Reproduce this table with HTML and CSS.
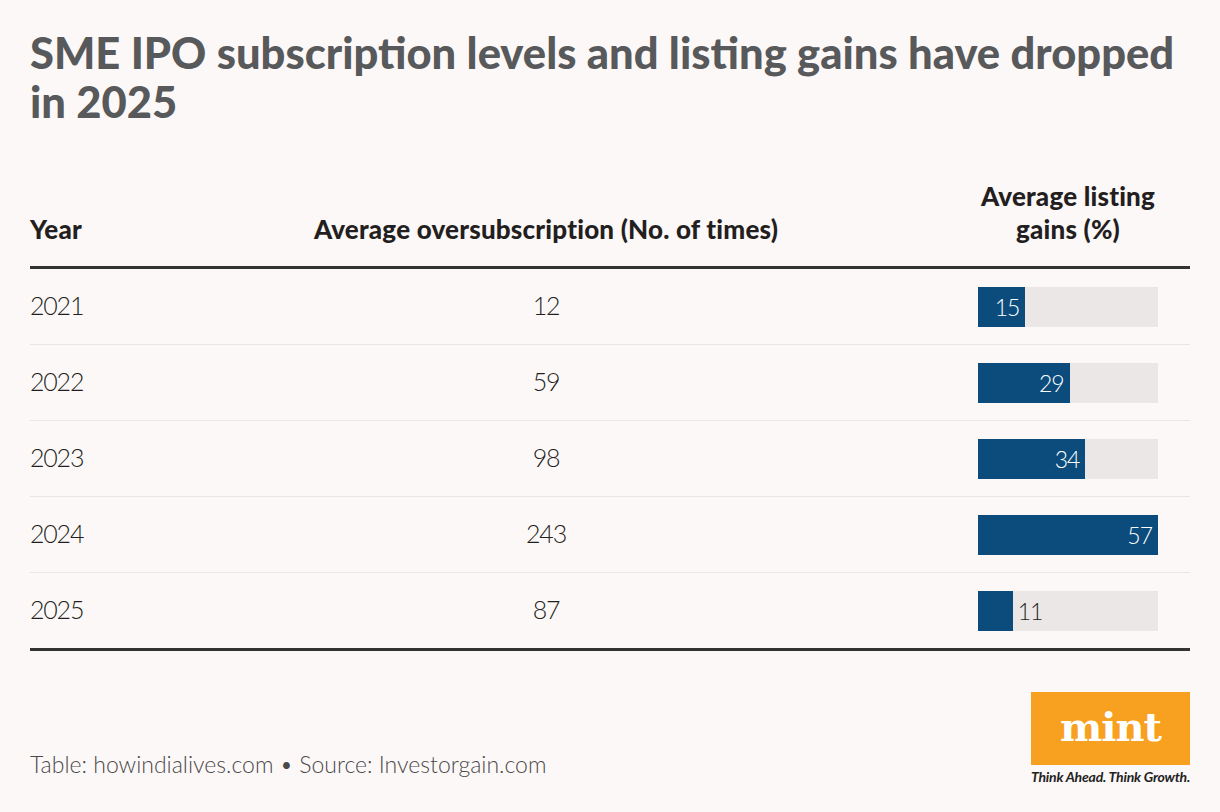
FILE: index.html
```html
<!DOCTYPE html>
<html>
<head>
<meta charset="utf-8">
<link rel="stylesheet" href="styles.css">
</head>
<body>
<div class="page">
  <h1 class="title">SME IPO subscription levels and listing gains have dropped in 2025</h1>
  <div class="table">
    <div class="row head">
      <div class="c-year">Year</div>
      <div class="c-sub">Average oversubscription (No. of times)</div>
      <div class="c-gain">Average listing<br>gains (%)</div>
    </div>
    <div class="row">
      <div class="c-year">2021</div>
      <div class="c-sub">12</div>
      <div class="c-gain"><div class="track"><div class="bar" style="width:47.4px"><span class="lbl">15</span></div></div></div>
    </div>
    <div class="row">
      <div class="c-year">2022</div>
      <div class="c-sub">59</div>
      <div class="c-gain"><div class="track"><div class="bar" style="width:91.6px"><span class="lbl">29</span></div></div></div>
    </div>
    <div class="row">
      <div class="c-year">2023</div>
      <div class="c-sub">98</div>
      <div class="c-gain"><div class="track"><div class="bar" style="width:107.4px"><span class="lbl">34</span></div></div></div>
    </div>
    <div class="row">
      <div class="c-year">2024</div>
      <div class="c-sub">243</div>
      <div class="c-gain"><div class="track"><div class="bar" style="width:180px"><span class="lbl">57</span></div></div></div>
    </div>
    <div class="row last">
      <div class="c-year">2025</div>
      <div class="c-sub">87</div>
      <div class="c-gain"><div class="track"><div class="bar" style="width:34.7px"></div><span class="lbl out">11</span></div></div>
    </div>
  </div>
  <div class="footer">
    <div class="source">Table: howindialives.com • Source: Investorgain.com</div>
    <div class="logo">
      <div class="mint">mint</div>
      <div class="tag">Think Ahead. Think Growth.</div>
    </div>
  </div>
</div>
</body>
</html>
```
FILE: styles.css
```css
html, body {
  margin: 0;
  padding: 0;
  background: #fdf8f8;
}
.page {
  width: 1220px;
  height: 812px;
  box-sizing: border-box;
  padding: 28px 30px 0 30px;
  font-family: Lato, "Liberation Sans", sans-serif;
  color: #231f20;
}
.title {
  margin: 0;
  font-family: Lato, sans-serif;
  font-weight: 900;
  font-size: 43.5px;
  line-height: 49px;
  color: #58595b;
  letter-spacing: 0;
}
.table {
  margin-top: 54px;
  border-bottom: 3px solid #333;
}
.row {
  display: grid;
  grid-template-columns: 116px 800px 244px;
  align-items: center;
  height: 75px;
  border-bottom: 1px solid #ebe6e6;
  font-size: 25px;
  letter-spacing: -1.2px;
  font-weight: 300;
  color: #231f20;
}
.row .c-year, .row .c-sub {
  padding-bottom: 4px;
}
.row.head .c-year, .row.head .c-sub {
  padding-bottom: 0;
}
.row.last {
  border-bottom: none;
}
.row.head {
  height: auto;
  align-items: end;
  padding-bottom: 20px;
  border-bottom: 3px solid #333;
  font-weight: 900;
  font-size: 26px;
  letter-spacing: 0.2px;
  line-height: 33px;
  color: #231f20;
}
.c-sub, .c-gain {
  text-align: center;
}
.c-gain {
  display: flex;
  justify-content: center;
}
.head .c-gain {
  display: block;
}
.track {
  width: 180px;
  height: 40px;
  background: #ece7e7;
  display: flex;
  align-items: center;
}
.bar {
  height: 40px;
  background: #0c4c7c;
  display: flex;
  align-items: center;
  justify-content: flex-end;
  box-sizing: border-box;
  padding-right: 6px;
}
.lbl {
  color: #fff;
  font-size: 23px;
  letter-spacing: -1px;
  font-weight: 300;
}
.lbl.out {
  color: #231f20;
  padding-left: 5px;
}
.footer {
  display: flex;
  justify-content: space-between;
  align-items: flex-end;
  margin-top: 41px;
}
.source {
  font-size: 23px;
  font-weight: 300;
  color: #4a4a4a;
  padding-bottom: 7px;
}
.logo {
  width: 159px;
  display: flex;
  flex-direction: column;
  align-items: center;
}
.mint {
  width: 159px;
  height: 73px;
  background: #f8a020;
  color: #fff;
  font-family: "DejaVu Serif", serif;
  font-weight: 700;
  font-size: 40px;
  letter-spacing: -1px;
  display: flex;
  align-items: center;
  justify-content: center;
  padding-bottom: 4px;
  box-sizing: border-box;
}
.tag {
  margin-top: 3px;
  font-size: 14px;
  font-style: italic;
  font-weight: 700;
  color: #222;
  letter-spacing: -0.2px;
  white-space: nowrap;
}
```
